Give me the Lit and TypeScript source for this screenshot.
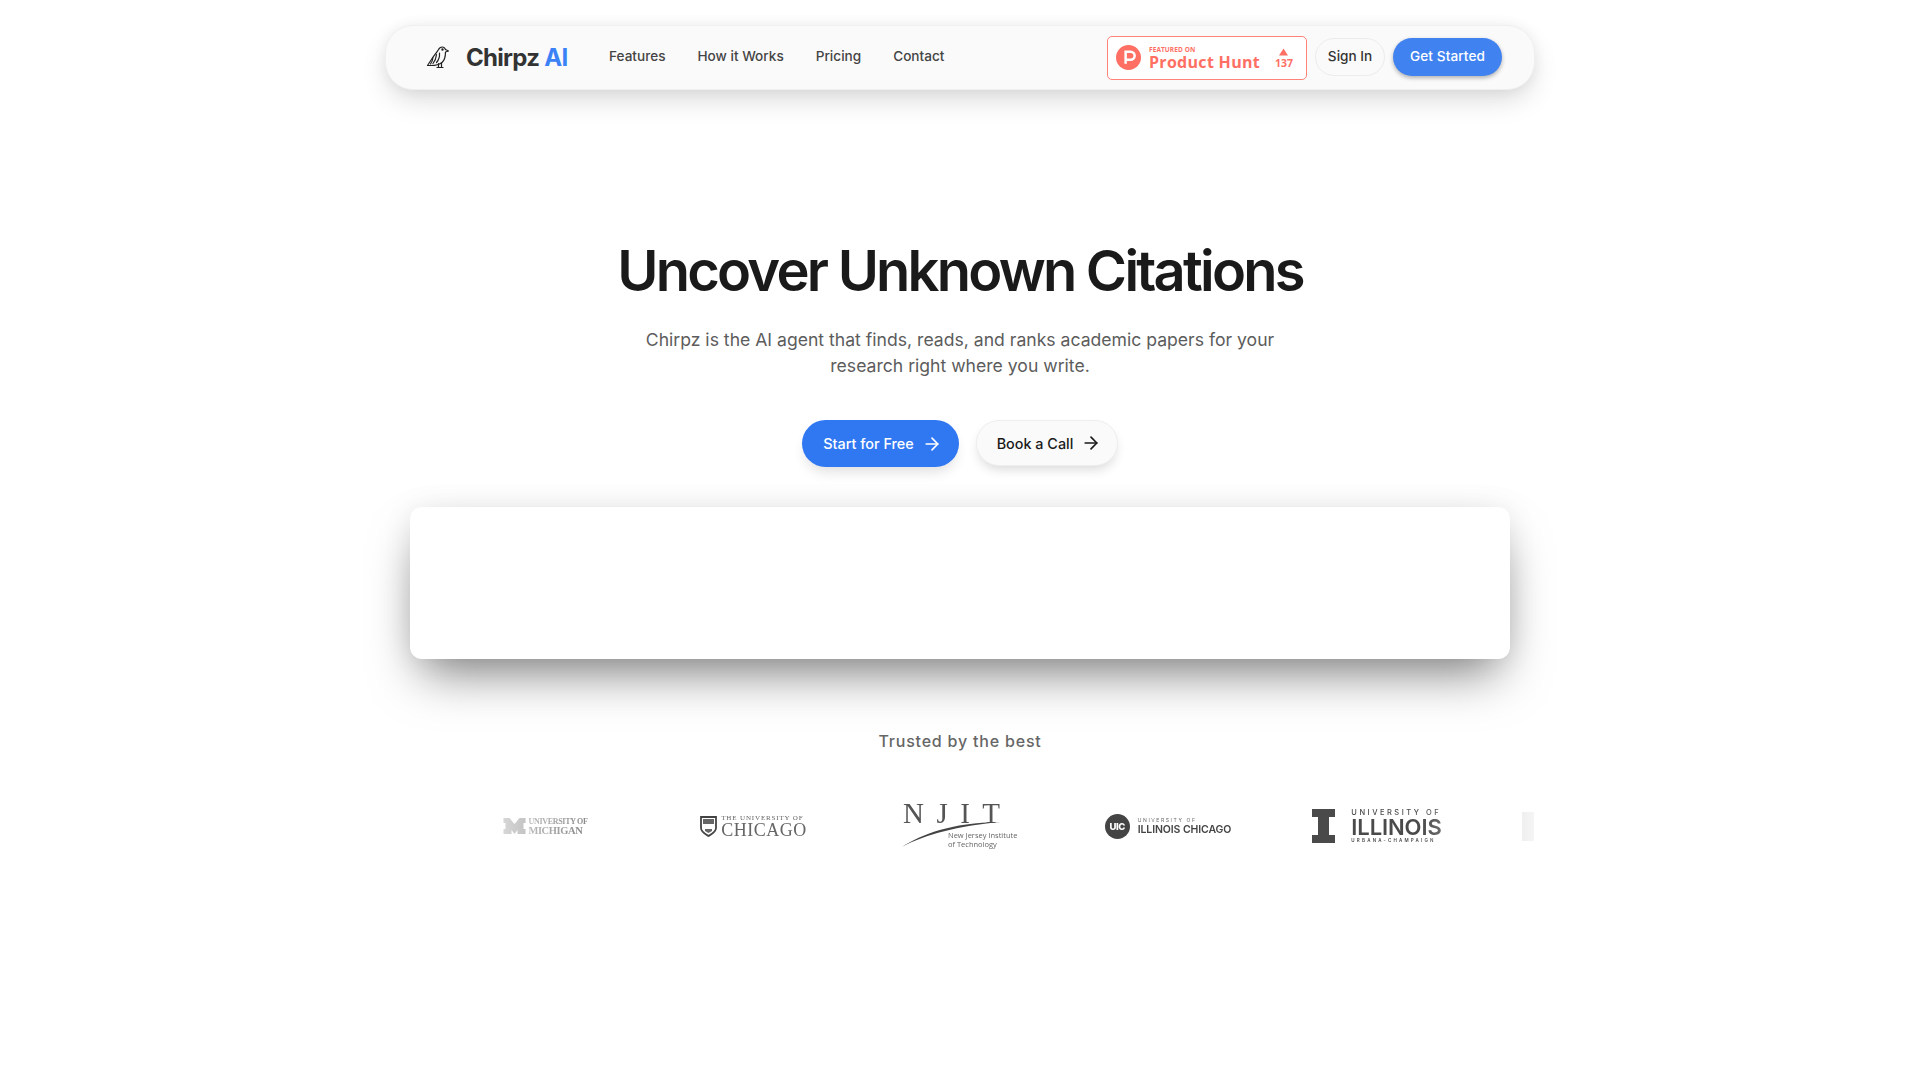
import { LitElement, html, css } from "lit";
import { customElement } from "lit/decorators.js";

const arrow = html`<svg class="arrow" viewBox="0 0 24 24" fill="none" stroke="currentColor" stroke-width="2" stroke-linecap="round" stroke-linejoin="round"><path d="M5 12h14"/><path d="m12 5 7 7-7 7"/></svg>`;

@customElement("app-root")
export class AppRoot extends LitElement {
  static styles = css`
    :host { display: block; min-height: 1080px; background: #fff; font-family: Inter, "Liberation Sans", sans-serif; color: #1a1a1a; }
    .page { display: flex; flex-direction: column; align-items: center; padding-top: 25px; }
    nav { width: 1150px; height: 65px; box-sizing: border-box; display: flex; align-items: center; padding: 0 32px 0 40px; background: #fafafa; border: 1px solid #f0f0f0; border-radius: 28px; box-shadow: 0 12px 28px -4px rgba(0,0,0,.16), 0 0 14px rgba(0,0,0,.05); }
    .brand { display: flex; align-items: center; gap: 16px; font-size: 24px; font-weight: 700; letter-spacing: -0.7px; color: #333; width: 183px; height: 34px; margin-top: -1px; }
    .brand b { font-weight: 700; color: #3b82f6; }
    .bird { width: 24px; height: 24px; flex: none; }
    .links { display: flex; gap: 32px; font-size: 13.6px; line-height: 16px; font-weight: 500; color: #444; margin-top: -3px; }
    .right { margin-left: auto; display: flex; align-items: center; gap: 8px; }
    .ph { width: 200px; height: 44px; box-sizing: border-box; display: flex; align-items: center; background: #fff; border: 1px solid #ff8378; border-radius: 5px; padding: 0 13px 0 8px; color: #ff6f63; font-family: "Open Sans", "Noto Sans", sans-serif; }
    .ph-logo { width: 25px; height: 25px; flex: none; margin-right: 8px; }
    .ph-text { display: flex; flex-direction: column; flex: 1; padding-top: 2px; }
    .ph-top { font-size: 6.5px; line-height: 7px; font-weight: 700; letter-spacing: .1px; }
    .ph-main { font-size: 16px; line-height: 18px; font-weight: 700; letter-spacing: .3px; }
    .ph-vote { display: flex; flex-direction: column; align-items: center; font-size: 10.5px; font-weight: 700; line-height: 11px; gap: 2px; padding-top: 1px; }
    .tri { width: 9px; height: 8px; }
    .signin { height: 38px; width: 70px; box-sizing: border-box; display: flex; align-items: center; justify-content: center; border: 1px solid #ececec; border-radius: 19px; font-size: 13.6px; font-weight: 500; color: #333; background: #fafafa; padding-bottom: 2px; margin-top: -2px; }
    .started { height: 38px; width: 109px; box-sizing: border-box; display: flex; align-items: center; justify-content: center; border-radius: 19px; background: #4083f0; color: #fff; font-size: 13.6px; font-weight: 500; letter-spacing: .1px; padding-bottom: 2px; margin-top: -2px; box-shadow: 0 2px 4px rgba(0,0,0,.3); }
    h1 { margin: 145px 0 0; font-size: 56px; line-height: 72px; font-weight: 600; letter-spacing: -2.75px; color: #1a1a1a; text-align: center; }
    p.sub { margin: 20px 0 0; width: 660px; text-align: center; font-size: 17.6px; line-height: 26px; color: #5c5c5c; }
    .cta { display: flex; gap: 17px; margin-top: 41px; align-items: flex-start; }
    .btn { height: 47px; box-sizing: border-box; display: flex; align-items: center; gap: 8px; justify-content: center; border-radius: 24px; font-size: 14.4px; font-weight: 500; }
    .primary { width: 157px; background: #3078f2; color: #fff; padding-left: 4px; box-shadow: 0 8px 14px -4px rgba(0,0,0,.14); }
    .secondary { width: 142px; height: 46px; background: #fafafa; color: #1a1a1a; border: 1px solid #eee; padding-left: 4px; box-shadow: 0 6px 12px -3px rgba(0,0,0,.16); }
    .arrow { width: 20px; height: 20px; }
    .card { width: 1100px; height: 152px; margin-top: 40px; background: #fff; border-radius: 12px; box-shadow: 0 25px 50px -12px rgba(0,0,0,.5), 0 0 30px rgba(0,0,0,.07); }
    .trusted { margin-top: 72px; font-size: 16px; line-height: 20px; font-weight: 500; letter-spacing: .8px; color: #666; }
    .strip { width: 1150px; height: 70px; margin-top: 40px; overflow: hidden; display: flex; justify-content: center; align-items: center; gap: 48px; -webkit-mask-image: linear-gradient(to right, transparent 0, transparent 6%, #000 24%, #000 90%, #0004 98%, #0002 100%); mask-image: linear-gradient(to right, transparent 0, transparent 6%, #000 24%, #000 90%, #0004 98%, #0002 100%); }
    .logo { width: 160px; flex: none; display: flex; align-items: center; justify-content: center; color: #4a4a4a; }
    .um { gap: 2px; color: #444; font-family: "Liberation Serif", serif; font-weight: 700; font-size: 8px; line-height: 9px; letter-spacing: -.3px; padding-left: 3px; box-sizing: border-box; }
    .um .m { width: 23px; height: 16px; }
    .um-big { font-size: 10.5px; line-height: 10px; letter-spacing: -.4px; }
    .stack { display: flex; flex-direction: column; }
    .uc { gap: 4px; font-family: "Liberation Serif", serif; color: #666; padding-left: 3px; box-sizing: border-box; }
    .uc .s { width: 17px; height: 21px; }
    .uc-a { font-size: 7px; line-height: 8px; letter-spacing: .85px; }
    .uc-b { font-size: 18px; line-height: 16px; letter-spacing: .5px; }
    .njit { width: 116px; height: 54px; flex: none; margin-top: -6px; }
    .njit svg { width: 116px; height: 54px; display: block; }
    .uic { gap: 8px; font-family: Inter, sans-serif; color: #444; }
    .uic-c { width: 25px; height: 25px; border-radius: 50%; background: #444; color: #fff; font-size: 9.5px; font-weight: 800; display: flex; align-items: center; justify-content: center; letter-spacing: -.4px; }
    .uic-a { font-size: 5px; letter-spacing: 1.6px; line-height: 7px; color: #666; }
    .uic-b { font-size: 10.5px; font-weight: 600; line-height: 12px; letter-spacing: -.1px; }
    .ill { gap: 16px; color: #4a4a4a; font-family: Inter, sans-serif; padding-left: 2px; box-sizing: border-box; }
    .ill .i { width: 23px; height: 34px; }
    .ill-a { font-size: 7.5px; letter-spacing: 2.5px; line-height: 9px; font-weight: 500; }
    .ill-b { font-size: 22px; line-height: 21px; font-weight: 600; letter-spacing: -.1px; }
    .ill-c { font-size: 4.5px; letter-spacing: 2.2px; line-height: 6px; font-weight: 600; }
    .ghost { justify-content: flex-start; }
    .ghost i { display: block; width: 12px; height: 29px; background: #b5b5b5; margin-left: 18px; }
  `;

  render() {
    return html`<div class="page">
      <nav>
        <div class="brand">
          <svg class="bird" viewBox="0 0 24 24" fill="none" stroke="#222" stroke-width="1.2" stroke-linecap="round" stroke-linejoin="round">
            <path d="M1.500 20.500H5c4 0 8-.5 11-3 2.500-2.200 3.500-6.500 3.500-10.500L22.500 6l-3-1.500C19 3 17.800 2 16.200 2c-2 0-3.200 1.500-4 3-1.500 2.500-3.500 4.500-5.500 7.500z"/>
            <path d="M7 12.500c-.3 2.500-1 4.500-2.500 6.500M10.500 9.500c-.3 3.500-1.500 6.500-3.500 9M13.500 8c.3 3.500-.8 7-3 9.500"/>
            <path d="M12.500 18.500v3.500M15.500 17.500v4.500M11 22.500h3M14 22.500h3"/>
            <circle cx="16.500" cy="4.500" r=".6" fill="#222"/>
          </svg>
          <span>Chirpz <b>AI</b></span>
        </div>
        <div class="links"><span>Features</span><span>How it Works</span><span>Pricing</span><span>Contact</span></div>
        <div class="right">
          <div class="ph">
            <svg class="ph-logo" viewBox="0 0 26 26"><circle cx="13" cy="13" r="13" fill="#ff6f63"/><path d="M10 19.500V7h5.200a4.200 4.200 0 0 1 0 8.400H10" fill="none" stroke="#fff" stroke-width="2.600"/></svg>
            <div class="ph-text"><span class="ph-top">FEATURED ON</span><span class="ph-main">Product Hunt</span></div>
            <div class="ph-vote"><svg class="tri" viewBox="0 0 10 8"><path d="M5 0l5 8H0z" fill="#ff6f63"/></svg><span>137</span></div>
          </div>
          <div class="signin">Sign In</div>
          <div class="started">Get Started</div>
        </div>
      </nav>
      <h1>Uncover Unknown Citations</h1>
      <p class="sub">Chirpz is the AI agent that finds, reads, and ranks academic papers for your research right where you write.</p>
      <div class="cta">
        <div class="btn primary">Start for Free ${arrow}</div>
        <div class="btn secondary">Book a Call ${arrow}</div>
      </div>
      <div class="card"></div>
      <div class="trusted">Trusted by the best</div>
      <div class="strip">
        <div class="logo"></div>
        <div class="logo um">
          <svg class="m" viewBox="0 0 22 16"><path d="M0 0h6l5 6 5-6h6v5h-2v6h2v5h-8v-4l-3 4-3-4v4H0v-5h2V5H0z" fill="#555"/></svg>
          <div class="stack"><span>UNIVERSITY OF</span><span class="um-big">MICHIGAN</span></div>
        </div>
        <div class="logo uc">
          <svg class="s" viewBox="0 0 17 21"><path d="M1 1h15v11c0 4-4 6-7.500 8C5 18 1 16 1 12z" fill="none" stroke="#444" stroke-width="1.800"/><path d="M3 3h11v5H3zM5 13h7v2l-3.500 2L5 15z" fill="#666"/></svg>
          <div class="stack"><span class="uc-a">THE UNIVERSITY OF</span><span class="uc-b">CHICAGO</span></div>
        </div>
        <div class="logo"><div class="njit">
          <svg viewBox="0 -6 116 54">
            <text x="1" y="21" font-family="Liberation Serif, serif" font-size="29" fill="#555" textLength="97" lengthAdjust="spacing">NJIT</text>
            <path d="M0 45C20 32 48 21 98 20 56 24 24 32 0 45z" fill="#444"/>
            <text x="46" y="36" font-family="Open Sans, sans-serif" font-size="7.500" fill="#666">New Jersey Institute</text>
            <text x="46" y="45" font-family="Open Sans, sans-serif" font-size="7.500" fill="#666">of Technology</text>
          </svg>
        </div></div>
        <div class="logo uic">
          <div class="uic-c">UIC</div>
          <div class="stack"><span class="uic-a">UNIVERSITY OF</span><span class="uic-b">ILLINOIS CHICAGO</span></div>
        </div>
        <div class="logo ill">
          <svg class="i" viewBox="0 0 23 34"><path d="M0 0h23v8h-6v18h6v8H0v-8h6V8H0z" fill="#4a4a4a"/></svg>
          <div class="stack"><span class="ill-a">UNIVERSITY OF</span><span class="ill-b">ILLINOIS</span><span class="ill-c">URBANA-CHAMPAIGN</span></div>
        </div>
        <div class="logo ghost"><i></i></div>
      </div>
    </div>`;
  }
}
